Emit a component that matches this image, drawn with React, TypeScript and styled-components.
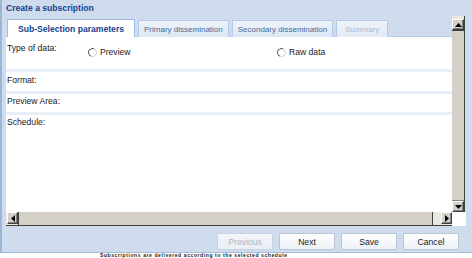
import React from 'react';
import styled, { createGlobalStyle, css } from 'styled-components';

const Global = createGlobalStyle`
  html, body { margin: 0; padding: 0; background: #ffffff; }
  body {
    width: 472px; height: 258px; overflow: hidden;
    font-family: "Liberation Sans", Arial, sans-serif;
  }
`;

const Window = styled.div`
  width: 472px;
  height: 253px;
  box-sizing: border-box;
  background: #cfdcee;
  border-left: 2px solid #9cb6d8;
  border-bottom: 1px solid #a9bdd8;
  display: flex;
  flex-direction: column;
`;

const Title = styled.div`
  height: 16px;
  line-height: 16px;
  padding-left: 4px;
  font-size: 8.6px;
  font-weight: bold;
  color: #15428b;
`;

const Body = styled.div`
  margin-left: 4px;
  display: grid;
  grid-template-columns: 446px 14px;
  grid-template-rows: 196px 14px;
`;

const ScrollArea = styled.div`
  display: flex;
  flex-direction: column;
  overflow: hidden;
`;

const TabStrip = styled.div`
  height: 21px;
  box-sizing: border-box;
  display: flex;
  align-items: flex-end;
  gap: 3px;
  padding-left: 1px;
  border-bottom: 1px solid #b9cde8;
`;

const Tab = styled.div<{ $active?: boolean; $disabled?: boolean }>`
  height: 17px;
  box-sizing: border-box;
  padding: 0 5px;
  display: flex;
  align-items: center;
  font-size: 8px;
  white-space: nowrap;
  border: 1px solid #b3c9e7;
  border-bottom: none;
  background: linear-gradient(#eef3fa, #dce7f5);
  color: #4a6a96;
  margin-bottom: -1px;
  ${(p) =>
    p.$active &&
    css`
      background: #ffffff;
      border-color: #9ebbe3;
      color: #15428b;
      font-weight: bold;
      font-size: 8.6px;
      height: 18px;
      padding: 0 10px;
    `}
  ${(p) =>
    p.$disabled &&
    css`
      color: #aab9cc;
      padding: 0 8px;
      background: linear-gradient(#eef3fa, #e2eaf5);
    `}
`;

const Panel = styled.div`
  flex: 1;
  background: #ffffff;
  display: flex;
  flex-direction: column;
`;

const Row = styled.div<{ $h: number; $last?: boolean }>`
  height: ${(p) => p.$h}px;
  flex: ${(p) => (p.$last ? 1 : 'none')};
  box-sizing: border-box;
  display: flex;
  align-items: flex-start;
  padding-left: 1px;
  border-bottom: ${(p) => (p.$last ? 'none' : '3px solid #e8eef5')};
`;

const Label = styled.div<{ $top: number }>`
  width: 81px;
  padding-top: ${(p) => p.$top}px;
  font-size: 8.6px;
  color: #222;
`;

const RadioGroup = styled.div`
  display: flex;
  padding-top: 10px;
`;

const RadioItem = styled.label<{ $w: number }>`
  width: ${(p) => p.$w}px;
  display: flex;
  align-items: center;
  gap: 3px;
  font-size: 8.6px;
  color: #222;
`;

const RadioCircle = styled.span`
  width: 9px;
  height: 9px;
  box-sizing: border-box;
  border-radius: 50%;
  border: 1.2px solid;
  border-color: #4a4a4a #d0d0d0 #d0d0d0 #4a4a4a;
  background: #fff;
  transform: rotate(-20deg);
`;

const ScrollBtn = styled.div<{ $h?: boolean }>`
  width: ${(p) => (p.$h ? '11px' : '12px')};
  height: ${(p) => (p.$h ? '12px' : '11px')};
  box-sizing: border-box;
  background: #d4d0c8;
  border: 1px solid;
  border-color: #ffffff #404040 #404040 #ffffff;
  box-shadow: inset -1px -1px 0 #808080;
  display: flex;
  align-items: center;
  justify-content: center;
  flex: none;
`;

const VScroll = styled.div`
  display: flex;
  flex-direction: column;
  padding-top: 3px;
  background: #e9e7e1;
  border-right: 1px solid #404040;
  width: 13px;
  box-sizing: border-box;
`;

const VThumb = styled.div`
  flex: 1;
  background: #d4d0c8;
  border-top: 1px solid #404040;
  border-bottom: 1px solid #808080;
`;

const HScroll = styled.div`
  display: flex;
  align-items: stretch;
  background: #e9e7e1;
  border-bottom: 1px solid #404040;
  box-sizing: border-box;
  padding-left: 1px;
`;

const HThumb = styled.div`
  flex: 1;
  background: #d4d0c8;
  border-left: 1px solid #404040;
  border-right: 1px solid #404040;
  margin-right: 8px;
`;

const Corner = styled.div`
  background: #ffffff;
`;

const Footer = styled.div`
  flex: 1;
  display: flex;
  justify-content: flex-end;
  align-items: flex-start;
  gap: 6px;
  padding: 7px 13px 0 0;
`;

const Button = styled.button<{ $disabled?: boolean }>`
  width: 56px;
  height: 17px;
  padding: 0;
  box-sizing: border-box;
  border: 1px solid #b9c6d6;
  border-radius: 1px;
  background: linear-gradient(#ffffff, #edf1f6);
  font-family: "Liberation Sans", Arial, sans-serif;
  font-size: 8.6px;
  color: ${(p) => (p.$disabled ? '#a9b5c4' : '#222')};
  ${(p) =>
    p.$disabled &&
    css`
      background: linear-gradient(#f3f6fa, #e8eef5);
      border-color: #c7d3e1;
    `}
`;

const BottomStrip = styled.div`
  height: 5px;
  overflow: hidden;
  padding-left: 100px;
`;

const BehindText = styled.div`
  font-size: 5px;
  line-height: 5px;
  font-weight: bold;
  letter-spacing: 0.6px;
  color: #222;
  font-family: "Liberation Sans", Arial, sans-serif;
  white-space: nowrap;
`;

const Arrow = ({ dir }: { dir: 'up' | 'down' | 'left' | 'right' }) => {
  const pts = {
    up: '0,4 3.5,0 7,4',
    down: '0,0 3.5,4 7,0',
    left: '4,0 0,3.5 4,7',
    right: '0,0 4,3.5 0,7',
  }[dir];
  const vertical = dir === 'up' || dir === 'down';
  return (
    <svg width={vertical ? 7 : 4} height={vertical ? 4 : 7} viewBox={vertical ? '0 0 7 4' : '0 0 4 7'}>
      <polygon points={pts} fill="#000" />
    </svg>
  );
};

export default function App() {
  return (
    <>
      <Global />
      <Window>
        <Title>Create a subscription</Title>
        <Body>
          <ScrollArea>
            <TabStrip>
              <Tab $active>Sub-Selection parameters</Tab>
              <Tab>Primary dissemination</Tab>
              <Tab>Secondary dissemination</Tab>
              <Tab $disabled>Summary</Tab>
            </TabStrip>
            <Panel>
              <Row $h={35}>
                <Label $top={6}>Type of data:</Label>
                <RadioGroup>
                  <RadioItem $w={189}>
                    <RadioCircle />
                    Preview
                  </RadioItem>
                  <RadioItem $w={100}>
                    <RadioCircle />
                    Raw data
                  </RadioItem>
                </RadioGroup>
              </Row>
              <Row $h={22}>
                <Label $top={3}>Format:</Label>
              </Row>
              <Row $h={21}>
                <Label $top={2}>Preview Area:</Label>
              </Row>
              <Row $h={40} $last>
                <Label $top={2}>Schedule:</Label>
              </Row>
            </Panel>
          </ScrollArea>
          <VScroll>
            <ScrollBtn>
              <Arrow dir="up" />
            </ScrollBtn>
            <VThumb />
            <ScrollBtn>
              <Arrow dir="down" />
            </ScrollBtn>
          </VScroll>
          <HScroll>
            <ScrollBtn $h>
              <Arrow dir="left" />
            </ScrollBtn>
            <HThumb />
            <ScrollBtn $h>
              <Arrow dir="right" />
            </ScrollBtn>
          </HScroll>
          <Corner />
        </Body>
        <Footer>
          <Button $disabled>Previous</Button>
          <Button>Next</Button>
          <Button>Save</Button>
          <Button>Cancel</Button>
        </Footer>
      </Window>
      <BottomStrip>
        <BehindText>Subscriptions are delivered according to the selected schedule</BehindText>
      </BottomStrip>
    </>
  );
}
